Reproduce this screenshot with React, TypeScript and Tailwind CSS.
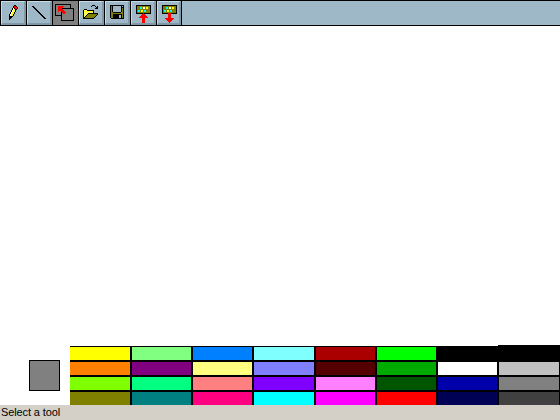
import React from "react";

const ink: Record<string, string> = {
  k: "#000000",
  r: "#ff0000",
  w: "#ffffff",
  y: "#ffff00",
  o: "#808000",
  c: "#00ffff",
  l: "#ffff80",
  g: "#9eb8c8",
};

type Icon = { x: number; y: number; rows: string[] };

function PixelIcon({ x, y, rows }: Icon) {
  return (
    <svg width="22" height="21" viewBox="2 2 22 21" overflow="visible" shapeRendering="crispEdges" className="block shrink-0">
      {rows.flatMap((row, j) =>
        [...row].map((c, i) =>
          ink[c] ? <rect key={`${i}-${j}`} x={x + i} y={y + j} width="1" height="1" fill={ink[c]} /> : null,
        ),
      )}
    </svg>
  );
}

const board = [
  "kkkkkkkkkkkkkkk",
  "koooooooooooook",
  "koooccowwoyyook",
  "koooccowwoyyook",
  "koooooooooooook",
  "koccoyyoccooook",
  "koccoyyoccooook",
  "koooooooooooook",
];

const tools: Icon[] = [
  {
    x: 9,
    y: 5,
    rows: [
      ".....kk..",
      "....krrk.",
      "....krrrk",
      "...kwkrrk",
      "...kwykk.",
      "..kwyyk..",
      "..kwyyk..",
      ".kwyyk...",
      ".kwyyk...",
      "kwyyk....",
      "kwyyk....",
      "kkkk.....",
      "kkk......",
      "kk.......",
      "k........",
    ],
  },
  { x: 6, y: 6, rows: Array.from({ length: 13 }, (_, i) => ".".repeat(i) + "kk") },
  {
    x: 3,
    y: 4,
    rows: [
      "kkkkkkkkkkkkkkkk...",
      "k..............k...",
      "k..rrrrrr......k...",
      "k..rrrrr.......k...",
      "k..rrrrkkkkkkkkkkkk",
      "k..rrrrr..........k",
      "k..rrrrrr.........k",
      "k..r..rrrr........k",
      "k.....krrrr.......k",
      "k.....k.rr........k",
      "k.....k...........k",
      "kkkkkkk...........k",
      "......k...........k",
      "......k...........k",
      "......k...........k",
      "......k...........k",
      "......kkkkkkkkkkkkk",
    ],
  },
  {
    x: 5,
    y: 5,
    rows: [
      ".........kkk....",
      "........k...k.k.",
      ".............kk.",
      "............kkk.",
      ".kkk............",
      "klylkkkkkkk.....",
      "kylylylylyk.....",
      "klylylylylk.....",
      "kylylkkkkkkkkkk.",
      "klylkoooooooook.",
      "kylkoooooooook..",
      "klkoooooooook...",
      "kkoooooooook....",
      "kkkkkkkkkkk.....",
    ],
  },
  {
    x: 6,
    y: 5,
    rows: [
      "kkkkkkkkkkkkkk",
      "kokggggggggkgk",
      "kokggggggggkkk",
      "kokggggggggkok",
      "kokggggggggkok",
      "kokggggggggkok",
      "kokggggggggkok",
      "kookkkkkkkkook",
      "kooooooooooook",
      "kookkkkkkkkkok",
      "kookkkkkkggkok",
      "kookkkkkkggkok",
      "kookkkkkkggkok",
      ".kkkkkkkkkkkkk",
    ],
  },
  {
    x: 6,
    y: 5,
    rows: [
      ...board,
      "kkkkkkkrkkkkkkk",
      "......rrr......",
      ".....rrrrr.....",
      "....rrrrrrr....",
      "...rrrrrrrrr...",
      "......rrr......",
      "......rrr......",
      "......rrr......",
      "......rrr......",
      "......rrr......",
    ],
  },
  {
    x: 6,
    y: 5,
    rows: [
      ...board,
      "kkkkkkrrrkkkkkk",
      "......rrr......",
      "......rrr......",
      "......rrr......",
      "......rrr......",
      "...rrrrrrrrr...",
      "....rrrrrrr....",
      ".....rrrrr.....",
      "......rrr......",
      ".......r.......",
    ],
  },
];

const colors = [
  ["#ffff00", "#80ff80", "#0080ff", "#80ffff", "#aa0000", "#00ff00", "#000000", "#000000"],
  ["#ff8000", "#800080", "#ffff80", "#8080ff", "#550000", "#00aa00", "#ffffff", "#c0c0c0"],
  ["#80ff00", "#00ff80", "#ff8080", "#8000ff", "#ff80ff", "#005500", "#0000aa", "#808080"],
  ["#808000", "#008080", "#ff0080", "#00ffff", "#ff00ff", "#ff0000", "#000055", "#404040"],
];

export default function App() {
  return (
    <div className="flex h-[420px] w-[560px] flex-col overflow-hidden bg-white">
      <header className="flex h-[26px] shrink-0 border-y border-black bg-[#9eb8c8]">
        {tools.map((icon, i) => (
          <button
            key={i}
            className={`h-6 shrink-0 border-l border-black ${i === tools.length - 1 ? "w-[25px]" : "w-[26px]"}`}
          >
            <span
              className={`flex h-6 overflow-hidden border-t border-r-2 border-b-2 border-l ${
                i === 2
                  ? "border-[#808080] bg-[#808080]"
                  : "border-t-[#c8dce8] border-r-[#8098a8] border-b-[#8098a8] border-l-[#c8dce8]"
              }`}
            >
              <PixelIcon {...icon} />
            </span>
          </button>
        ))}
        <div className="flex-1 border-l border-black" />
      </header>
      <main className="flex min-h-0 flex-1 items-end">
        <div className="flex w-[70px] pb-[14px] pl-[29px]">
          <div className="h-[31px] w-[31px] shrink-0 border border-black bg-[#808080]" />
        </div>
        <div className="flex flex-col">
          <div className="ml-[428px] h-px w-[62px] bg-black" />
          <div className="grid w-[490px] grid-cols-[60px_59px_59px_60px_59px_59px_59px_60px] grid-rows-[repeat(4,13px)] gap-[2px] bg-black pt-px">
            {colors.flat().map((color, i) => (
              <div key={i} style={{ backgroundColor: color }} />
            ))}
          </div>
        </div>
      </main>
      <footer className="h-[15px] shrink-0 bg-[#d4d0c8] pl-px font-['Liberation_Sans',sans-serif] text-[11px] leading-[14px] tracking-[-0.12px] text-black">
        Select a tool
      </footer>
    </div>
  );
}
